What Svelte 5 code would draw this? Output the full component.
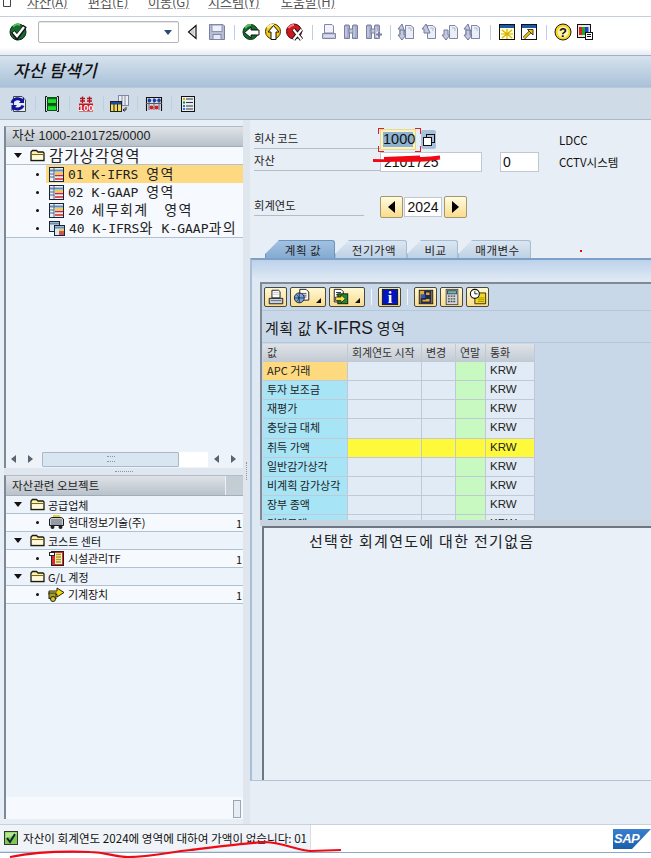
<script>
  const menu = [['자산(A)',61],['편집(E)',60],['이동(G)',60],['시스템(Y)',73],['도움말(H)',60]];
  const tree1 = [
    [[['01 K-IFRS ',0],['영역',1]], true, 'table'],
    [[['02 K-GAAP ',0],['영역',1]], false, 'table'],
    [[['20 ',0],['세무회계',1],['  ',0],['영역',1]], false, 'table'],
    [[['40 K-IFRS',0],['와',1],[' K-GAAP',0],['과의',1]], false, 'tables']
  ];
  const tree2 = [
    ['공급업체', '현대정보기술(주)', 'bus'],
    ['코스트 센터', '시설관리TF', 'coins'],
    ['G/L 계정', '기계장치', 'arrow']
  ];
  const rows = [
    ['APC 거래', 'o'], ['투자 보조금', ''], ['재평가', ''], ['충당금 대체', ''],
    ['취득 가액', 'y'], ['일반감가상각', ''], ['비계획 감가상각', ''], ['장부 종액', ''], ['미래금액', '']
  ];
</script>

{#snippet sep()}<span class="sep"></span>{/snippet}
{#snippet folder()}
  <svg class="ic" width="15" height="13" viewBox="0 0 15 13"><path d="M1 11.500V3L2.500 1.500H6.500L8 3H13L14 4V11.500Z" fill="#fff2b0" stroke="#1c1c10" stroke-width="1.300"/><path d="M1.500 5.500H13.500" stroke="#7a6a20"/><path d="M2 6.500H13V10.500H2Z" fill="#fffbe0"/></svg>
{/snippet}
{#snippet tableIc()}
  <svg class="ic" width="15" height="15" viewBox="0 0 15 15"><rect x=".5" y=".5" width="14" height="14" fill="#e4eef6" stroke="#1c2430"/><path d="M1 3.500H14" stroke="#6a8ab0" stroke-width="2"/><path d="M5 1V14" stroke="#4a6a90"/><path d="M1 7H5M1 10H5" stroke="#4a6a90"/><path d="M6 6H14" stroke="#e8c820" stroke-width="1.500"/><path d="M6 8.500H14M6 12H14" stroke="#e02020" stroke-width="1.600"/></svg>
{/snippet}
{#snippet tablesIc()}
  <svg class="ic" width="16" height="15" viewBox="0 0 16 15"><rect x=".5" y=".5" width="10" height="10" fill="#dce8f2" stroke="#1c2430"/><path d="M1 2.500H10" stroke="#6a8ab0" stroke-width="2"/><rect x="5.500" y="4.500" width="10" height="10" fill="#dce8f2" stroke="#1c2430"/><path d="M6 6.500H15" stroke="#6a8ab0" stroke-width="2"/><path d="M10 9H15" stroke="#e8c820" stroke-width="1.500"/><path d="M10 11H15M10 13H15" stroke="#d02020" stroke-width="1.400"/></svg>
{/snippet}
{#snippet busIc()}
  <svg class="ic" width="17" height="15" viewBox="0 0 17 15"><path d="M5 1H12" stroke="#e8d030" stroke-width="2"/><path d="M1.500 10.500V4L3.500 2.500H13.500L15.500 4V10.500Z" fill="#c8ccd4" stroke="#1a1a1a"/><path d="M3 5H14M3 7H14M3 9H14" stroke="#606a78"/><circle cx="4.500" cy="12" r="2" fill="#222"/><circle cx="12.500" cy="12" r="2" fill="#222"/></svg>
{/snippet}
{#snippet coinsIc()}
  <svg class="ic" width="17" height="15" viewBox="-1 0 17 15"><rect x="2.500" y=".5" width="12" height="14" fill="#e02828" stroke="#222"/><rect x="6" y="2" width="7" height="11" fill="#f4f0d0"/><path d="M7 3.500H12M7 6H12M7 8.500H12M7 11H12" stroke="#b09a10" stroke-width="1.600"/><rect x=".5" y="1.500" width="5" height="3" fill="#fff" stroke="#222"/></svg>
{/snippet}
{#snippet arrowIc()}
  <svg class="ic" width="17" height="15" viewBox="0 0 17 15"><path d="M1 4H9V1L16 5.500 9 10V7.500H1Z" fill="#f2d800" stroke="#222"/><rect x="1" y="6" width="7" height="5.500" fill="#a8a020" stroke="#222"/><circle cx="5" cy="12" r="2.500" fill="#d8c820" stroke="#222"/></svg>
{/snippet}
{#snippet pg(dir, ax)}
  <path d="M8.500 3.500H14L16.500 6V16.500H8.500Z" fill="#eceef6" stroke="#8088a8"/><path d="M11 6H14V9" fill="none" stroke="#b0b6cc"/>
  {#if dir==='up'}<path d="M{ax} 2 {ax-4} 7H{ax-2}V{ax===7?11:13}H{ax+2}V{ax===7?11:13}H{ax+4}Z" fill="#c4c8dc" stroke="#7078a0"/>
  {:else}<path d="M{ax} 18 {ax-4} 13H{ax-2}V8H{ax+2}V13H{ax+4}Z" fill="#c4c8dc" stroke="#7078a0"/>{/if}
{/snippet}
{#snippet tool(kind)}
  <svg class="tool" width="20" height="20" viewBox="0 0 20 20">
    {#if kind==='ok'}
      <circle cx="10" cy="10" r="8" fill="#156a30" stroke="#0a2a14"/><path d="M5 4.500A6 6 0 0 1 12 3" fill="none" stroke="#5fc060" stroke-width="2"/><path d="M5 9.500 9 15 17 4" fill="none" stroke="#111" stroke-width="4.500"/><path d="M5.500 10 9 14 16 5" fill="none" stroke="#fff" stroke-width="2.400"/>
    {:else if kind==='tri'}
      <path d="M11 3.500 3.500 10 11 16.500Z" fill="#f4f4f4" stroke="#111" stroke-width="1.200"/><path d="M9.500 6.500V13.500L5.500 10Z" fill="#c8ccd4"/>
    {:else if kind==='save'}
      <path d="M2.500 2.500H16L17.500 4V17.500H2.500Z" fill="#b6bcd4" stroke="#7880a4"/><rect x="5" y="3" width="10" height="6.500" fill="#eef0fa" stroke="#8c94b4"/><rect x="6" y="12.500" width="8" height="5" fill="#e8eaf4" stroke="#8088a8"/>
    {:else if kind==='back'}
      <circle cx="9.500" cy="10" r="7.500" fill="#126e2c" stroke="#0a3014"/><path d="M4 6A6 6 0 0 1 10 3" fill="none" stroke="#5fc060" stroke-width="2"/><path d="M3.500 10.500 10 5V8H18V13H10V16Z" fill="#fff" stroke="#111"/>
    {:else if kind==='up'}
      <circle cx="10" cy="9.500" r="7.500" fill="#f6cc10" stroke="#40300a"/><path d="M4.500 6A6 6 0 0 1 11 3" fill="none" stroke="#fff0a0" stroke-width="2"/><path d="M10.500 3.500 16 10H13V17.500H8V10H5Z" fill="#fff" stroke="#111"/>
    {:else if kind==='cancel'}
      <circle cx="9" cy="9.500" r="7.500" fill="#cc1820" stroke="#500"/><path d="M3.500 6A6 6 0 0 1 9 3" fill="none" stroke="#f08080" stroke-width="2"/><path d="M8.500 7.500 16.500 17.500M16.500 7.500 8.500 17.500" stroke="#111" stroke-width="4"/><path d="M8.500 7.500 16.500 17.500M16.500 7.500 8.500 17.500" stroke="#fff" stroke-width="2.200"/>
    {:else if kind==='print'}
      <path d="M5.500 2.500H13L14.500 4V11H5.500Z" fill="#f2f3fa" stroke="#8088a8"/><path d="M3.500 11.500H16.500V16.500H3.500Z" fill="#c4c8dc" stroke="#8088a8"/><path d="M5 14H15" stroke="#eef"/>
    {:else if kind==='find'||kind==='findn'}
      <path d="M3.500 4 4 3H8L8.500 4V16.500H3.500Z" fill="#a8aec8" stroke="#7880a4"/><path d="M11.500 4 12 3H16L16.500 4V16.500H11.500Z" fill="#a8aec8" stroke="#7880a4"/><rect x="8" y="7" width="4" height="4" fill="#c4c8dc" stroke="#7880a4"/><path d="M5 5V15M13 5V15" stroke="#d8dcec"/>
      {#if kind==='findn'}<path d="M13 12.500H19M16 9.500V15.500" stroke="#fff" stroke-width="4"/><path d="M13 12.500H19M16 9.500V15.500" stroke="#7880a4" stroke-width="2.200"/>{/if}
    {:else if kind==='pg1'}{@render pg('up',5)}{@render pg('down',5)}
    {:else if kind==='pg2'}{@render pg('up',7)}
    {:else if kind==='pg3'}{@render pg('down',5)}
    {:else if kind==='pg4'}{@render pg('up',5)}{@render pg('down',5)}
    {:else if kind==='new'}
      <rect x="2.500" y="2.500" width="15" height="15" fill="#ffffd0" stroke="#111"/><rect x="3" y="3" width="14" height="3" fill="#1c5aa8"/><path d="M5 8 15 16M15 8 5 16M10 7V17M4 12H16" stroke="#d8b000" stroke-width="1.200"/>
    {:else if kind==='link'}
      <rect x="2.500" y="2.500" width="15" height="15" fill="#fff" stroke="#111"/><rect x="3" y="3" width="14" height="3" fill="#1c5aa8"/><path d="M5 16 12 9" stroke="#111" stroke-width="3"/><path d="M5 16 12 9" stroke="#f2c800" stroke-width="1.800"/><path d="M8.500 7.500H14V13Z" fill="#f2c800" stroke="#111" stroke-width=".8"/>
    {:else if kind==='help'}
      <circle cx="10" cy="10" r="8" fill="#fbd21e" stroke="#1a1a1a"/><circle cx="10" cy="10" r="5.500" fill="#fff6b0"/><text x="10" y="15" text-anchor="middle" font-size="13" font-family="Liberation Sans" font-weight="700" fill="#111">?</text>
    {:else if kind==='layout'}
      <rect x="2.500" y="2.500" width="13" height="13" fill="#e8e8e8" stroke="#111"/><rect x="4" y="5" width="3" height="8" fill="#e02020"/><rect x="7" y="5" width="3" height="8" fill="#20a820"/><rect x="10" y="5" width="3.500" height="8" fill="#2040d0"/><rect x="10.500" y="10.500" width="7" height="7" fill="#fff" stroke="#111"/><path d="M12 12.500H16M12 14.500H16" stroke="#111"/>
    {:else if kind==='refresh'}
      <path d="M5.500 2.500H14L17.500 6V17.500H5.500Z" fill="#e8edf4" stroke="#444"/><path d="M4 9A6 6 0 0 1 14.500 7M15 11.500A6 6 0 0 1 5 13" fill="none" stroke="#0e14a0" stroke-width="3"/><path d="M16 3V9H11ZM3.500 17V11H9Z" fill="#0e14a0"/>
    {:else if kind==='cols'}
      <path d="M5 2.500H3.500V17.500H5M15 2.500H16.500V17.500H15" fill="none" stroke="#111"/><rect x="5.500" y="3.500" width="9" height="6" fill="#1ce02c" stroke="#124a18"/><rect x="5.500" y="10.500" width="9" height="6" fill="#1ce02c" stroke="#124a18"/><path d="M6 4.500H14M6 11.500H14" stroke="#0e6a1a" stroke-width="1.500"/>
    {:else if kind==='hundred'}
      <rect x="3" y="9.500" width="14" height="8" fill="#cc1420"/><text x="10" y="17" text-anchor="middle" font-size="9" font-family="Liberation Sans" font-weight="700" fill="#fff">100</text><path d="M4 4.500H9M11 4.500H16M6.500 2.500V9M13.500 2.500V9M4 7H9M11 7H16" stroke="#b01420" stroke-width="1.300"/>
    {:else if kind==='grid'}
      <rect x="8.500" y="1.500" width="10" height="10" fill="#eceef4" stroke="#8088a8"/><path d="M12 2V11M15 2V11" stroke="#8088a8"/><rect x=".5" y="7.500" width="11" height="10" fill="#f6dc50" stroke="#222"/><rect x="1" y="8" width="10" height="2.500" fill="#1c4aa0"/><path d="M4 10V17M7.500 10V17" stroke="#222"/><path d="M16 13V16H13M14.500 14.500 13 16 14.500 17.500" fill="none" stroke="#222"/>
    {:else if kind==='abacus'}
      <path d="M2.500 17V3.500H17.500V17" fill="none" stroke="#111" stroke-width="1.100"/><path d="M2 9.500H18" stroke="#555"/><path d="M5 4V16M10 4V16M15 4V16" stroke="#666"/><circle cx="5.500" cy="6.500" r="1.800" fill="#1c3ca8"/><circle cx="10.500" cy="6.500" r="1.800" fill="#1c3ca8"/><circle cx="15" cy="6.500" r="1.800" fill="#1c3ca8"/><circle cx="7.500" cy="13.500" r="1.900" fill="#d81c20"/><circle cx="12.500" cy="13.500" r="1.900" fill="#d81c20"/>
    {:else if kind==='list'}
      <rect x="3.500" y="2.500" width="13" height="15" fill="#e8eef0" stroke="#111"/><rect x="5" y="4" width="2" height="2" fill="#d8b000"/><rect x="5" y="7.500" width="2" height="2" fill="#20882c"/><rect x="5" y="11" width="2" height="2" fill="#2a78c8"/><rect x="5" y="14" width="2" height="2" fill="#2a78c8"/><path d="M8 5H15M8 8.500H15M8 12H15M8 15H15" stroke="#334"/>
    {:else if kind==='doc'}
      <path d="M5.500 2.500H13L14.500 4V11H5.500Z" fill="#fff" stroke="#111"/><path d="M7 5H13M7 7H13" stroke="#bcc"/><path d="M2.500 11.500H17.500V17.500H2.500Z" fill="#c8d4e4" stroke="#111"/><path d="M4 14H16" stroke="#667"/>
    {:else if kind==='globe'}
      <path d="M7.500 1.500H14.500L17.500 4.500V13.500H7.500Z" fill="#fff" stroke="#111"/><path d="M10 6H15M10 8H15M10 10H15" stroke="#444"/><circle cx="7" cy="11" r="5.500" fill="#7ca4dc" stroke="#123"/><path d="M7 5.500V16.500M2 11H12M4 7.500C7 9 7 13 4 14.500" fill="none" stroke="#123" stroke-width=".8"/>
    {:else if kind==='export'}
      <path d="M2.500 1.500H10L12.500 4V15.500H2.500Z" fill="#fff" stroke="#111"/><path d="M4.500 5H10M4.500 7.500H8" stroke="#222"/><rect x="6.500" y="6.500" width="11" height="11" fill="#1c8a30" stroke="#111"/><path d="M4 10H10V7.500L15 12 10 16.500V14H4Z" fill="#f6e040" stroke="#111" stroke-width=".8"/>
    {:else if kind==='info'}
      <rect x="1.500" y="1.500" width="17" height="17" fill="#0414c0" stroke="#111"/><text x="10" y="16.500" text-anchor="middle" font-size="18" font-family="Liberation Serif" font-weight="700" fill="#fff">i</text>
    {:else if kind==='filter'}
      <rect x="2.500" y="2.500" width="15" height="15" fill="#eaa830" stroke="#111"/><path d="M9 4H15V9H11V11H15V16H5V12H9Z" fill="none" stroke="#1c2a58" stroke-width="2.200"/><rect x="4" y="7" width="5" height="4" fill="#2a5ab0"/>
    {:else if kind==='calc'}
      <rect x="3.500" y="1.500" width="13" height="17" fill="#d4d8dc" stroke="#444"/><rect x="5" y="3" width="10" height="3.500" fill="#68b4ac" stroke="#445"/><path d="M5.500 9H14.500M5.500 12H14.500M5.500 15H14.500" stroke="#444" stroke-width="1.500" stroke-dasharray="2 1"/>
    {:else if kind==='clock'}
      <path d="M8.500 5.500H18.500V17.500H6.500V11Z" fill="#f2d818" stroke="#222"/><path d="M10 11H17M10 13H17M10 15H17" stroke="#a89000"/><circle cx="6.500" cy="6.500" r="5" fill="#fff" stroke="#111" stroke-width="1.200"/><path d="M6.500 3.500V6.500H9.500" fill="none" stroke="#111"/>
    {/if}
  </svg>
{/snippet}

<div class="screen">
  <div class="menu">
    <svg class="menuic" width="9" height="8" viewBox="0 0 9 8"><path d="M1.500 0V6.500H8.500V0" fill="none" stroke="#444"/></svg>
    {#each menu as m}<span class="mi" style="width:{m[1]}px">{m[0]}</span>{/each}
  </div>

  <div class="systool">
    <span class="okslot">{@render tool('ok')}</span>
    <div class="cmd"><span class="caret"></span></div>
    {@render tool('tri')}{@render tool('save')}{@render sep()}
    {@render tool('back')}{@render tool('up')}{@render tool('cancel')}{@render sep()}
    {@render tool('print')}{@render tool('find')}{@render tool('findn')}{@render sep()}
    {@render tool('pg1')}{@render tool('pg2')}{@render tool('pg3')}{@render tool('pg4')}{@render sep()}
    {@render tool('new')}{@render tool('link')}{@render sep()}
    {@render tool('help')}{@render tool('layout')}
  </div>
  <div class="band"></div>
  <div class="title">자산 탐색기</div>
  <div class="apptool">
    {@render tool('refresh')}{@render sep()}
    {@render tool('cols')}{@render sep()}
    {@render tool('hundred')}{@render sep()}
    {@render tool('grid')}{@render sep()}
    {@render tool('abacus')}{@render sep()}
    {@render tool('list')}
  </div>

  <div class="main">
    <div class="left">
      <div class="pane top">
        <div class="phead num">자산 1000-2101725/0000</div>
        <div class="row root"><span class="tw"></span>{@render folder()}<span class="big">감가상각영역</span></div>
        {#each tree1 as t}
          <div class="row leaf mono">
            <span class="dot"></span>
            <span class="cell" class:sel={t[1]}>
              {#if t[2]==='table'}{@render tableIc()}{:else}{@render tablesIc()}{/if}
              <span class="big">{#each t[0] as s}<span class:kor={s[1]}>{s[0]}</span>{/each}</span>
            </span>
          </div>
        {/each}
        <div class="spacer"></div>
        <div class="hscroll">
          <span class="arr l"></span><span class="arr r"></span>
          <span class="thumb"><i></i></span>
          <span class="fill"></span>
          <span class="arr l"></span><span class="arr r"></span>
        </div>
      </div>
      <div class="split"><span></span></div>
      <div class="pane bot">
        <div class="phead two"><span>자산관련 오브젝트</span><i></i></div>
        {#each tree2 as g}
          <div class="row g"><span class="tw"></span>{@render folder()}<span>{g[0]}</span></div>
          <div class="row leaf l2">
            <span class="dot"></span>
            <span class="cell">
              {#if g[2]==='bus'}{@render busIc()}{:else if g[2]==='coins'}{@render coinsIc()}{:else}{@render arrowIc()}{/if}
              <span class="lbl">{g[1]}</span><span class="cnt">1</span>
            </span>
          </div>
        {/each}
        <div class="spacer"></div>
        <div class="vfoot"><span></span></div>
      </div>
    </div>
    <div class="gut"><span></span></div>

    <div class="right">
      <div class="form">
        <div class="fr r1">
          <span class="flab w1">회사 코드</span>
          <span class="focus"><span class="cc"><b>1000</b></span><span class="corner"></span></span>
          <span class="copy"><svg width="14" height="14" viewBox="0 0 14 14"><rect x="4.500" y="1.500" width="8" height="8" fill="none" stroke="#111"/><rect x="1.500" y="4.500" width="8" height="8" fill="#fff" stroke="#111"/></svg></span>
          <span class="desc d1">LDCC</span>
        </div>
        <div class="fr r2">
          <span class="flab w1">자산</span>
          <span class="inp asset">2101725</span>
          <span class="inp sub">0</span>
          <span class="desc d2">CCTV시스템</span>
        </div>
        <div class="fr r3">
          <span class="flab w2">회계연도</span>
          <span class="yb"><i class="tri-l"></i></span>
          <span class="inp year">2024</span>
          <span class="yb"><i class="tri-r"></i></span>
        </div>
      </div>
      <div class="tabs">
        <span class="tab on t1">계획 값</span>
        <span class="tab t2">전기가액</span>
        <span class="tab t3">비교</span>
        <span class="tab t4">매개변수</span>
      </div>
      <div class="tabbody">
        <div class="gridbox">
          <div class="gtool">
            <span class="gb">{@render tool('doc')}</span>
            <span class="gb wide">{@render tool('globe')}<i class="dd"></i></span>
            <span class="gb wide">{@render tool('export')}<i class="dd"></i></span>
            <span class="gsep"></span>
            <span class="gb">{@render tool('info')}</span>
            <span class="gsep"></span>
            <span class="gb">{@render tool('filter')}</span>
            <span class="gb">{@render tool('calc')}</span>
            <span class="gb">{@render tool('clock')}</span>
          </div>
          <div class="gtitle">계획 값 <b>K-IFRS</b> 영역</div>
          <div class="table">
            <div class="tr hd">
              <span>값</span><span>회계연도 시작</span><span>변경</span><span>연말</span><span>통화</span>
            </div>
            {#each rows as r}
              <div class="tr" class:yl={r[1]==='y'}>
                <span class="c0" class:or={r[1]==='o'}>{r[0]}</span><span></span><span></span><span class="gn"></span><span class="cur">KRW</span>
              </div>
            {/each}
          </div>
        </div>
        <div class="hsplit"></div>
        <div class="textbox">선택한 회계연도에 대한 전기없음</div>
      </div>
    </div>
  </div>

  <div class="status">
    <div class="msg">
      <svg width="14" height="16" viewBox="0 0 14 16"><rect x=".5" y="1.500" width="13" height="13" fill="#7ec850" stroke="#333"/><path d="M1.500 2.500H12.500V5L1.500 8Z" fill="#b4e890"/><path d="M3 8 6 12 11 4" fill="none" stroke="#123" stroke-width="2"/></svg>
      <span>자산이 회계연도 2024에 영역에 대하여 가액이 없습니다: 01</span>
    </div>
    <div class="sap"><span>SAP</span></div>
  </div>
  <div class="blue"></div>
  <div class="tail"></div>

  <svg class="ink" width="651" height="858" viewBox="0 0 651 858">
    <path d="M373 160.500C385 161 395 160.500 408 159.500 420 159 430 158 440 157M384 158.500 420 157M400 160.500 425 160 440 158" fill="none" stroke="#f00814" stroke-width="2.800"/>
    <path d="M10 857C30 853 60 851 90 852 108 852 112 857 128 857 150 857 170 852 190 850 215 847 245 843 265 842 285 843 295 850 310 851L341 850" fill="none" stroke="#ee0a14" stroke-width="2.200"/>
    <rect x="580" y="250" width="2" height="2" fill="#f00"/>
  </svg>
</div>

<style>
  :global(body){margin:0;background:#e8eef5;}
  .screen{position:relative;width:651px;height:858px;overflow:hidden;display:flex;flex-direction:column;font-family:"Noto Sans CJK KR","Liberation Sans",sans-serif;font-size:11px;color:#111;background:#e8eef5;}
  .menu{height:17px;flex:none;box-sizing:border-box;background:#fff;border-bottom:1px solid #c6d0dc;display:flex;align-items:flex-start;padding-left:2px;overflow:hidden;}
  .menuic{margin:0 16px 0 0;flex:none;}
  .mi{flex:none;font-size:13px;line-height:13px;margin-top:-5px;white-space:nowrap;color:#555;text-decoration:underline;text-decoration-color:#aaa;}
  .systool{height:30px;flex:none;background:#fff;display:flex;align-items:center;padding-left:7px;}
  .okslot{width:32px;display:flex;flex:none;margin-left:-1px;}
  .systool .tool{margin:0 1px;}
  .okslot .tool{margin:0 0 0 2px !important;}
  .tool{flex:none;display:block;}
  .cmd{width:141px;height:22px;box-sizing:border-box;border:1px solid #b4b8be;border-radius:2px;background:#fff;margin-right:5px;position:relative;box-shadow:inset 0 1px 1px #e4e4e4;flex:none;}
  .caret{position:absolute;right:6px;top:8px;border:4px solid transparent;border-top:5px solid #2c4a78;border-bottom:0;}
  .sep{width:1px;height:15px;background:#bcd0e4;margin:0 5.500px;flex:none;}
  .band{height:9px;flex:none;background:linear-gradient(#fff,#e6ebf1);border-bottom:1px solid #9fb0c4;box-sizing:border-box;}
  .title{height:31px;flex:none;box-sizing:border-box;background:linear-gradient(#d6e2ee,#a9c1d8);font-size:17px;font-style:italic;font-weight:500;line-height:28px;padding-left:13px;color:#111;letter-spacing:.3px;}
  .apptool{height:33px;flex:none;box-sizing:border-box;background:#cfdce7;border-top:1px solid #b8c8d8;border-bottom:1px solid #a9b9cb;display:flex;align-items:center;padding-left:8px;}
  .apptool .sep{margin:0 6.500px;}
  .main{height:704px;flex:none;display:flex;}
  .left{width:243px;flex:none;padding:6px 0 0 4px;box-sizing:border-box;display:flex;flex-direction:column;}
  .gut{width:7px;flex:none;background:#dfe6ee;position:relative;}
  .gut span{position:absolute;left:3px;top:342px;height:18px;border-left:1px dotted #8a96a4;}
  .pane{box-sizing:border-box;border-left:2px solid #7c8a98;border-top:1px solid #b0bccb;background:#edf3fb;display:flex;flex-direction:column;}
  .top{height:342px;}
  .bot{height:344px;}
  .phead{height:20px;flex:none;box-sizing:border-box;background:linear-gradient(#dfe3e8,#b9c1ca);border-bottom:1px solid #9fadbc;font-size:11.500px;line-height:18px;padding-left:6px;color:#222;white-space:nowrap;overflow:hidden;}
  .num{font-family:"Liberation Sans","Noto Sans CJK KR",sans-serif;font-size:12.500px;}
  .two{display:flex;justify-content:space-between;}
  .two i{width:17px;border-left:1px solid #eef0f2;background:#c4ccd4;}
  .row{height:18px;flex:none;box-sizing:border-box;border-bottom:1px solid #b2c0cf;display:flex;align-items:center;background:#f6f9fd;white-space:nowrap;overflow:hidden;}
  .tw{width:0;height:0;border:4px solid transparent;border-top:5px solid #111;border-bottom:0;margin:0 8px;flex:none;}
  .ic{flex:none;margin-right:3px;display:block;}
  .big{font-size:15.500px;letter-spacing:1px;color:#222;margin-bottom:2px;margin-left:1px;}
  .mono .big{font-family:"DejaVu Sans Mono","Noto Sans CJK KR",monospace;font-size:13px;letter-spacing:0;white-space:pre;}
  .kor{font-size:14px;letter-spacing:1.400px;}
  .dot{width:3px;height:3px;border-radius:50%;background:#111;margin:0 7px 0 30px;flex:none;}
  .leaf{border-bottom:0;}
  .cell{flex:1;min-width:0;height:100%;display:flex;align-items:center;padding-left:3px;overflow:hidden;}
  .sel{background:#fdda82;}
  .l2{border-bottom:1px solid #b2c0cf;}
  .l2 .cell{padding-left:2px;}
  .l2 .ic{margin-right:3px;}
  .lbl{flex:1;font-size:11px;letter-spacing:-.1px;margin-bottom:1px;}
  .cnt{width:7px;font-size:11px;flex:none;}
  .top .row:nth-child(6){border-bottom:1px solid #b2c0cf;height:19px;}
  .spacer{flex:1;}
  .hscroll{height:16px;flex:none;display:flex;align-items:center;background:#eef3fa;margin-bottom:1px;}
  .arr{width:17px;height:16px;flex:none;position:relative;}
  .arr.l::after,.arr.r::after{content:"";position:absolute;top:4px;left:5px;border:4px solid transparent;}
  .arr.l::after{border-right:5px solid #5a6470;border-left:0;}
  .arr.r::after{border-left:5px solid #5a6470;border-right:0;}
  .thumb{width:137px;height:15px;margin-left:2px;background:#d8e6f2;border:1px solid #a9b8c8;box-sizing:border-box;border-radius:1px;display:flex;align-items:center;justify-content:center;}
  .thumb i{width:8px;height:4px;border-top:1px dotted #8a96a4;border-bottom:1px dotted #8a96a4;}
  .fill{flex:1;background:#fff;height:15px;margin-right:1px;}
  .split{height:7px;flex:none;background:#dfe6ee;display:flex;align-items:center;justify-content:center;}
  .split span{width:18px;border-top:1px dotted #8a96a4;}
  .g{background:#edf3fb;}
  .g span:last-child{font-size:11px;}
  .vfoot{height:22px;flex:none;display:flex;justify-content:flex-end;background:#f6f9fd;padding-right:2px;box-sizing:border-box;align-items:flex-start;padding-top:3px;}
  .vfoot span{width:8px;height:18px;border:1px solid #9aa6b4;background:#e8edf3;box-sizing:border-box;}
  .right{flex:1;min-width:0;display:flex;flex-direction:column;padding-top:8px;box-sizing:border-box;}
  .form{height:109px;flex:none;position:relative;padding-left:4px;}
  .fr{display:flex;align-items:center;}
  .r1{height:23px;}
  .r2{height:22px;}
  .r3{height:24px;margin-top:22px;}
  .flab{box-sizing:border-box;height:18px;border-bottom:1px solid #b4bcc6;font-size:11.300px;line-height:15px;color:#222;flex:none;}
  .w1{width:126px;}
  .w2{width:110px;margin-right:16px;}
  .focus{position:relative;display:block;flex:none;}
  .cc{display:block;width:36px;height:21px;box-sizing:border-box;background:#fdf3c0;border:1px solid #e8d890;padding:2px;}
  .cc b{display:block;background:#8eb2d2;font-weight:400;font-family:"Liberation Sans",sans-serif;font-size:14.500px;line-height:15px;text-align:center;color:#111;}
  .corner{position:absolute;left:-2px;right:-5px;top:-1px;bottom:-2px;border:1px solid #e02020;
    -webkit-mask:linear-gradient(#000 0 0) 0 0/6px 6px no-repeat,linear-gradient(#000 0 0) 100% 0/6px 6px no-repeat,linear-gradient(#000 0 0) 0 100%/6px 6px no-repeat,linear-gradient(#000 0 0) 100% 100%/6px 6px no-repeat;}
  .copy{width:15px;height:19px;background:#a8c0da;border-radius:2px;margin-left:5px;display:flex;align-items:center;justify-content:center;flex:none;}
  .desc{font-size:11.500px;color:#111;}
  .d1{margin-left:123px;}
  .d2{margin-left:20px;}
  .inp{display:block;flex:none;box-sizing:border-box;background:#fff;border:1px solid #c2c8d0;font-family:"Liberation Sans",sans-serif;font-size:14px;line-height:18px;padding-left:2px;height:20px;color:#111;}
  .asset{width:102px;padding-left:3px;}
  .sub{width:39px;margin-left:18px;}
  .yb{width:23px;height:22px;box-sizing:border-box;background:linear-gradient(#fffbe0,#fbdc8c);border:1px solid #a09870;border-radius:2px;display:flex;align-items:center;justify-content:center;flex:none;}
  .tri-l{border:6px solid transparent;border-right:7px solid #000;border-left:0;}
  .tri-r{border:6px solid transparent;border-left:7px solid #000;border-right:0;}
  .year{width:38px;text-align:center;padding:0;margin:0 2px 0 1px;}
  .tabs{height:21px;flex:none;display:flex;align-items:flex-end;padding-left:15px;box-sizing:border-box;position:relative;z-index:1;}
  .tab{height:18px;flex:none;box-sizing:border-box;background:linear-gradient(#dbe6f2,#bed1e4);border:1px solid #a6bcd2;border-bottom:0;border-radius:3px 3px 0 0;font-size:11.500px;line-height:18px;text-indent:6px;text-align:center;clip-path:polygon(14px 0,100% 0,100% 100%,0 100%,0 14px);white-space:nowrap;color:#222;letter-spacing:.5px;}
  .t1{width:70px;background:linear-gradient(#a2c1e0,#85abd2);border-color:#6d95bd;}
  .t2{width:72px;}
  .t3{width:51px;}
  .t4{width:73px;}
  .tabbody{height:523px;flex:none;box-sizing:border-box;background:linear-gradient(#bcd2ea,#dfe9f4 20px);border-left:2px solid #a9bfd8;border-top:2px solid #7ca0c6;border-bottom:1px solid #b5c3d2;padding:22px 0 0 8px;display:flex;flex-direction:column;}
  .gridbox{height:238px;flex:none;box-sizing:border-box;border-left:2px solid #7f8a96;border-top:2px solid #7f8a96;background:#c9d8e8;overflow:hidden;}
  .gtool{height:20px;display:flex;align-items:center;gap:3px;padding:3px 0 3px 2px;border-bottom:1px solid #b4c6d8;}
  .gb{width:23px;height:20px;box-sizing:border-box;display:flex;align-items:center;justify-content:center;background:linear-gradient(#fff8d4,#f9dc8e);border:1px solid #4a4838;border-radius:2px;flex:none;position:relative;}
  .gb .tool{width:18px;height:18px;flex:none;}
  .wide{width:36px;justify-content:flex-start;padding-left:2px;}
  .dd{position:absolute;right:4px;bottom:3px;width:0;height:0;border-style:solid;border-width:0 0 5px 5px;border-color:transparent transparent #111 transparent;}
  .gsep{width:1px;height:16px;background:#f4f8fc;margin:0 3px;flex:none;}
  .gtitle{height:32px;font-size:15px;line-height:33px;padding-left:3px;color:#1c1c1c;letter-spacing:.5px;white-space:nowrap;border-bottom:1px solid #b4c6d8;box-sizing:border-box;}
  .gtitle b{font-family:"Liberation Sans",sans-serif;font-size:17.500px;font-weight:400;letter-spacing:0;}
  .table{padding:1px 0 0 1px;}
  .table .tr{display:grid;grid-template-columns:85px 74px 34px 30px 49px;height:19.140px;box-sizing:border-box;width:272px;}
  .hd.tr{height:18px !important;}
  .tr span{box-sizing:border-box;border-right:1px solid #bfcad6;border-bottom:1px solid #bfcad6;background:#e0ebf5;font-size:11px;line-height:17.500px;padding-left:4px;white-space:nowrap;overflow:hidden;color:#222;}
  .hd span{background:linear-gradient(#dfe3e8,#c3cbd4);color:#333;letter-spacing:-.1px;}
  .tr .c0{background:#a6e4f6;}
  .tr .or{background:#fdd97f;}
  .tr .gn{background:#c7f9c0;}
  .tr .cur{font-family:"Liberation Sans",sans-serif;font-size:11.500px;}
  .yl span:not(.c0){background:#fff93b;}
  .hsplit{height:6px;flex:none;background:#c8d3de;}
  .textbox{flex:1;margin:0 0 0 2px;box-sizing:border-box;background:#e9f0f8;border-left:2px solid #6d7784;border-top:2px solid #6d7784;padding:2px 0 0 45px;font-size:15px;letter-spacing:1.300px;color:#222;}
  .status{height:28px;flex:none;display:flex;justify-content:space-between;background:#fff;border-top:1px solid #c8d2dc;box-sizing:border-box;}
  .msg{height:27px;width:311px;box-sizing:border-box;background:#f0f4f8;border:1px solid #d6dee6;border-left:0;border-top:0;border-radius:0 0 3px 0;display:flex;align-items:center;gap:5px;padding:0 0 0 4px;font-size:11.600px;white-space:nowrap;}
  .sap{width:38px;height:20px;margin-top:4px;background:linear-gradient(#3a7fd0,#1a5fa8);clip-path:polygon(0 0,100% 0,50% 100%,0 100%);color:#fff;font:italic 700 13px/20px "Liberation Sans",sans-serif;padding-left:1px;box-sizing:border-box;letter-spacing:-.5px;}
  .blue{height:1px;flex:none;background:#8ea6cc;}
  .tail{flex:1;background:#fff;}
  .ink{position:absolute;left:0;top:0;pointer-events:none;}
</style>
